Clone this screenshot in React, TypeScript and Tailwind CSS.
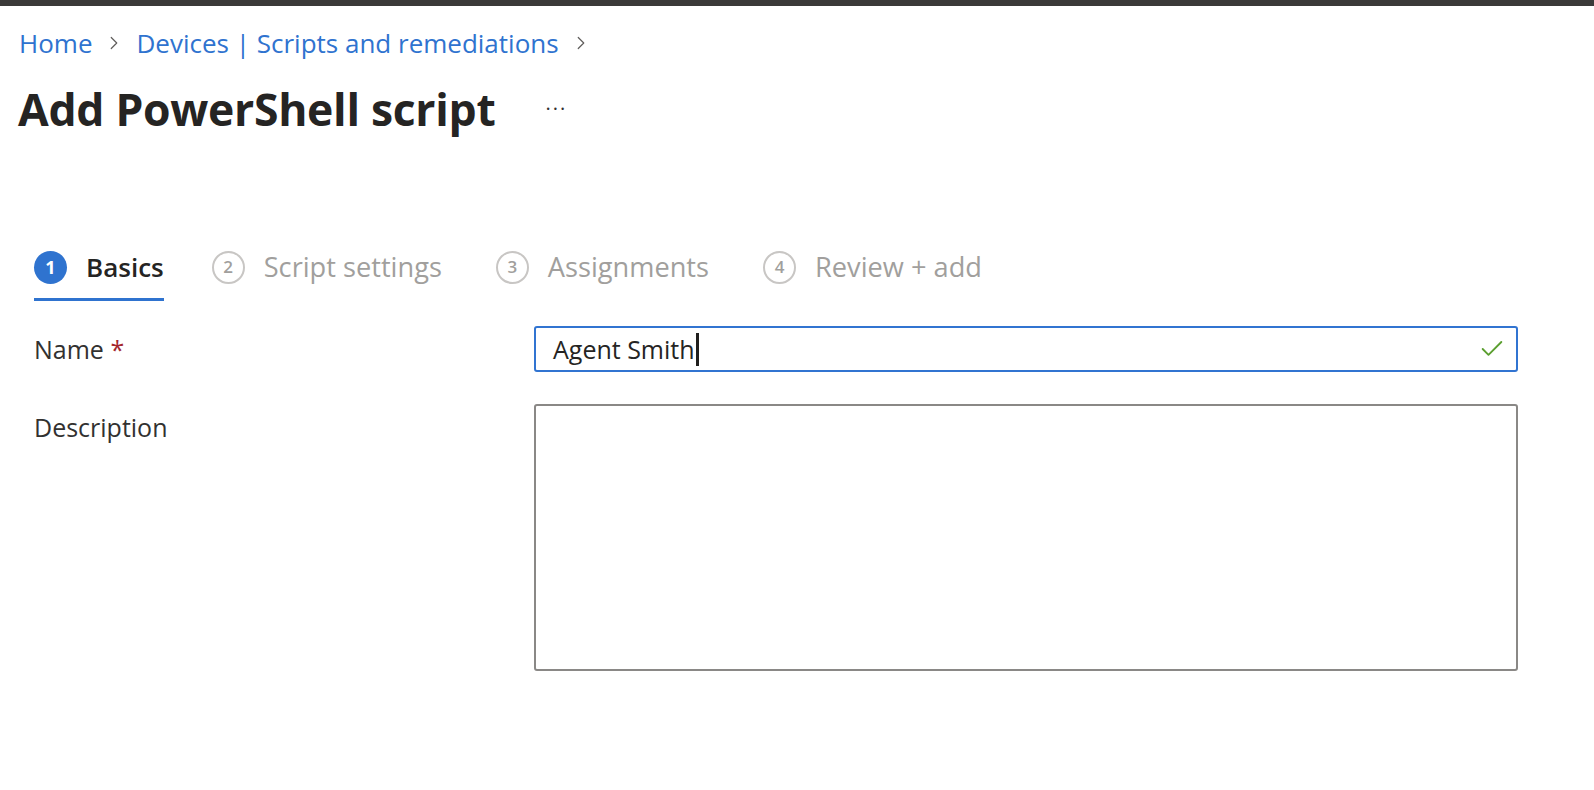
import { Check, ChevronRight } from "lucide-react";

const steps = [
  { n: 1, label: "Basics" },
  { n: 2, label: "Script settings" },
  { n: 3, label: "Assignments" },
  { n: 4, label: "Review + add" },
];

export default function App() {
  return (
    <div
      className="min-h-[790px] w-full bg-white text-[#323130]"
      style={{ fontFamily: '"Open Sans", "Noto Sans", sans-serif' }}
    >
      <div className="h-[6px] bg-[#3b3a39]" />

      {/* breadcrumb */}
      <nav className="mt-[24px] flex items-center pl-[19px] text-[26px] leading-[26px] text-[#2f73cf]">
        <span>Home</span>
        <ChevronRight className="mx-[11px] size-[22px] text-[#605e5c]" strokeWidth={1.3} />
        <span>Devices | Scripts and remediations</span>
        <ChevronRight className="ml-[11px] size-[22px] text-[#605e5c]" strokeWidth={1.3} />
      </nav>

      {/* title */}
      <div className="mt-[30px] flex items-center pl-[18px]">
        <h1 className="text-[44.5px] font-bold leading-[46px] tracking-[-0.3px] text-[#252423]">Add PowerShell script</h1>
        <span className="ml-[50px] text-[20px] leading-none tracking-[2px] text-[#323130]">···</span>
      </div>

      {/* steps */}
      <div className="mt-[118px] flex items-end gap-[54px] pl-[34px]">
        {steps.map((s, i) => (
          <div
            key={s.n}
            className={
              i === 0
                ? "mr-[-6px] flex items-center gap-[19px] border-b-[3px] border-[#2f73cf] pb-[14px]"
                : "flex items-center gap-[19px] pb-[17px]"
            }
          >
            <span
              className={
                i === 0
                  ? "flex size-[33px] items-center justify-center rounded-full bg-[#2f73cf] text-[18px] font-bold text-white"
                  : "flex size-[33px] items-center justify-center rounded-full border-2 border-[#c8c6c4] text-[17px] font-semibold text-[#a19f9d]"
              }
            >
              {s.n}
            </span>
            <span
              className={
                i === 0
                  ? "text-[26px] font-semibold leading-[34px] text-[#252423]"
                  : "text-[27.2px] leading-[34px] text-[#a19f9d]"
              }
            >
              {s.label}
            </span>
          </div>
        ))}
      </div>

      {/* form */}
      <div className="mt-[25px] grid grid-cols-[500px_984px] gap-y-[32px] pl-[34px]">
        <label className="pt-[6px] text-[25px] leading-[34px] text-[#323130]">
          Name <span className="text-[#a4262c]">*</span>
        </label>
        <div className="flex h-[46px] items-center rounded-[3px] border-2 border-[#3174d1] pl-[17px] pr-[10px]">
          <span className="text-[25px] leading-none text-[#252423]">Agent Smith</span>
          <span className="ml-[1px] h-[33px] w-[3px] bg-[#201f1e]" />
          <Check className="ml-auto size-[28px] text-[#5b9f30]" strokeWidth={1.6} />
        </div>

        <label className="pt-[6px] text-[25px] leading-[34px] text-[#323130]">Description</label>
        <div className="h-[267px] rounded-[3px] border-2 border-[#8a8886]" />
      </div>
    </div>
  );
}
